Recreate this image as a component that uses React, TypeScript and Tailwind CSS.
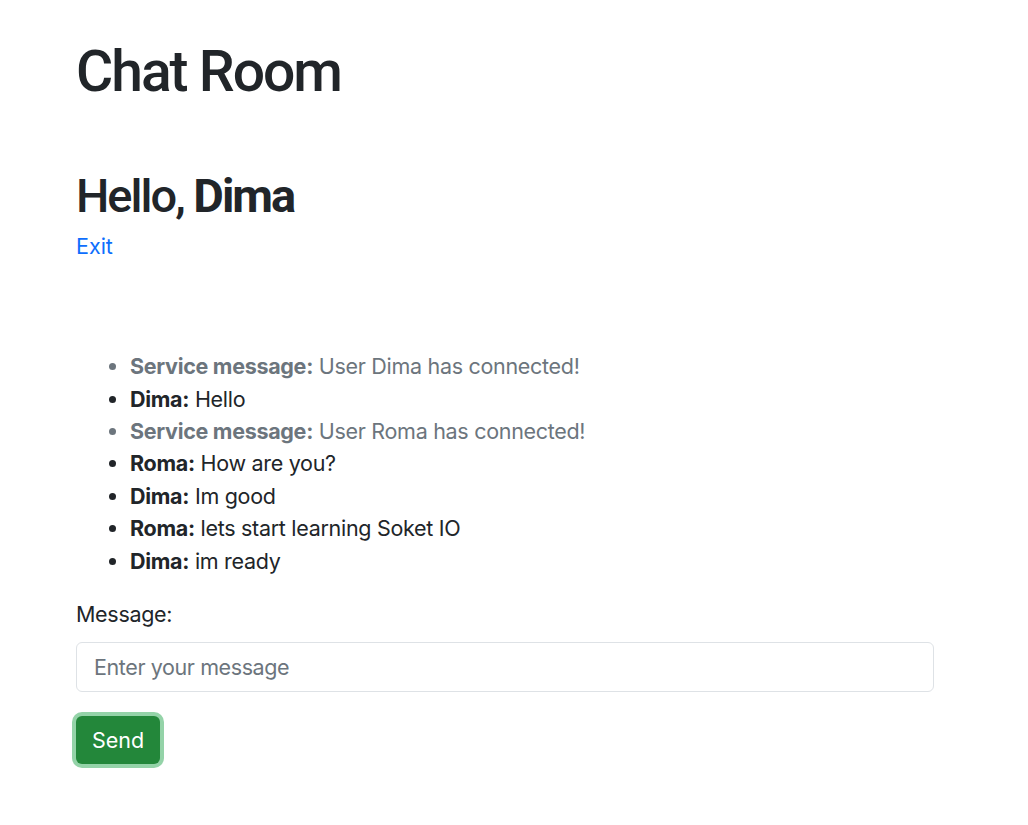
import React, { useState } from "react";

type Msg = { user: string; text: string; service?: boolean };

const initial: Msg[] = [
  { user: "Service message", text: "User Dima has connected!", service: true },
  { user: "Dima", text: "Hello" },
  { user: "Service message", text: "User Roma has connected!", service: true },
  { user: "Roma", text: "How are you?" },
  { user: "Dima", text: "Im good" },
  { user: "Roma", text: "lets start learning Soket IO" },
  { user: "Dima", text: "im ready" },
];

const App = () => {
  const [messages, setMessages] = useState<Msg[]>(initial);
  const [text, setText] = useState("");

  const send = (e: React.FormEvent) => {
    e.preventDefault();
    if (!text.trim()) return;
    setMessages([...messages, { user: "Dima", text }]);
    setText("");
  };

  return (
    <div className="min-h-[825px] bg-white pl-[76px] pt-[38px] font-['Inter',sans-serif] text-[#212529]">
      <h1 className="font-['Roboto',sans-serif] text-[57px] font-medium leading-[1.2] tracking-[-2px]">
        Chat Room
      </h1>

      <h2 className="mt-[62px] font-['Roboto',sans-serif] text-[47px] font-medium leading-[1.2] tracking-[-2px]">
        Hello, <b className="font-bold">Dima</b>
      </h2>
      <a href="#" className="mt-[5px] block w-fit text-[21.5px] leading-[32.4px] text-[#0d6efd]">
        Exit
      </a>

      <ul className="mt-[88px] list-disc pl-[54px] text-[21.5px] leading-[32.4px] tracking-[-0.3px]">
        {messages.map((m, i) => (
          <li key={i} className={m.service ? "text-[#6c757d]" : ""}>
            <b className="font-bold">{m.user}:</b> {m.text}
          </li>
        ))}
      </ul>

      <form onSubmit={send} className="w-[858px]">
        <label className="mt-[21px] block text-[21.5px] leading-[32.4px] tracking-[-0.3px]">Message:</label>
        <input
          value={text}
          onChange={(e) => setText(e.target.value)}
          placeholder="Enter your message"
          className="mt-[12px] block h-[50px] w-full rounded-[6px] border border-[#dee2e6] px-[17px] text-[21.5px] tracking-[-0.4px] placeholder:text-[#6c757d] focus:outline-none"
        />
        <button
          type="submit"
          className="mt-[24px] h-[48px] w-[84px] rounded-[6px] bg-[#23873a] text-[21.5px] text-white ring-4 ring-[#94d3a8]"
        >
          Send
        </button>
      </form>
    </div>
  );
};

export default App;
